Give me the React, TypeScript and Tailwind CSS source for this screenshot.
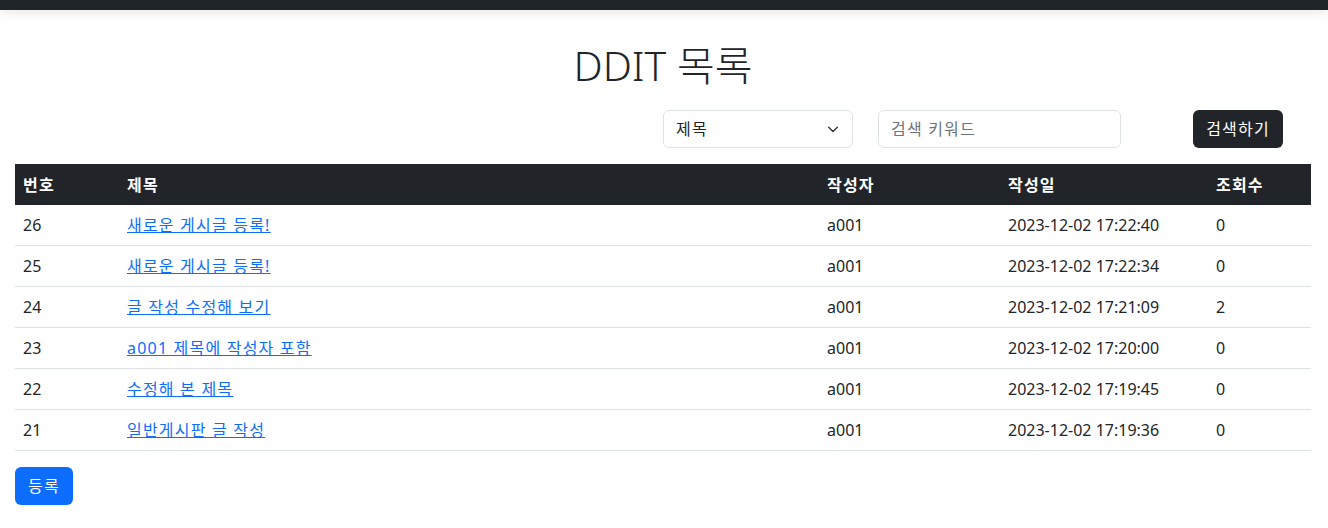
const FONT = "font-['Segoe_UI','Noto_Sans','Noto_Sans_CJK_KR',sans-serif]"

const rows = [
  { no: 26, title: '새로운 게시글 등록!', writer: 'a001', date: '2023-12-02 17:22:40', hit: 0 },
  { no: 25, title: '새로운 게시글 등록!', writer: 'a001', date: '2023-12-02 17:22:34', hit: 0 },
  { no: 24, title: '글 작성 수정해 보기', writer: 'a001', date: '2023-12-02 17:21:09', hit: 2 },
  { no: 23, title: 'a001 제목에 작성자 포함', writer: 'a001', date: '2023-12-02 17:20:00', hit: 0 },
  { no: 22, title: '수정해 본 제목', writer: 'a001', date: '2023-12-02 17:19:45', hit: 0 },
  { no: 21, title: '일반게시판 글 작성', writer: 'a001', date: '2023-12-02 17:19:36', hit: 0 },
]

// Hangul in the fallback CJK font runs a bit narrower than the original, so add a touch of tracking
const KO = 'tracking-[1.2px]'
const TD = 'px-[8px] py-[8px] leading-[24px]'

function SearchBar() {
  return (
    <div className="flex items-center justify-end pr-[28px]">
      <div className="relative w-[190px]">
        <select
          className={`h-[38px] w-full appearance-none rounded-[6px] border border-[#dee2e6] bg-white pl-[12px] pr-[36px] text-[16px] text-[#212529] ${KO}`}
        >
          <option>제목</option>
        </select>
        <svg
          className="pointer-events-none absolute right-[14px] top-[15px]"
          width="12"
          height="8"
          viewBox="0 0 16 11"
          fill="none"
          stroke="#343a40"
          strokeWidth="2"
          strokeLinecap="round"
          strokeLinejoin="round"
        >
          <path d="m2 3 6 6 6-6" />
        </svg>
      </div>
      <input
        className={`ml-[25px] h-[38px] w-[243px] rounded-[6px] border border-[#dee2e6] px-[12px] text-[16px] text-[#212529] placeholder:text-[#6c757d] ${KO}`}
        placeholder="검색 키워드"
      />
      <button
        type="button"
        className={`ml-[72px] h-[38px] w-[90px] rounded-[6px] bg-[#212529] text-[16px] text-white ${KO}`}
      >
        검색하기
      </button>
    </div>
  )
}

export default function App() {
  return (
    <div className={`min-h-screen bg-white text-[16px] text-[#212529] ${FONT}`}>
      <div className="h-[10px] bg-[#212529] shadow-[0_4px_8px_rgba(0,0,0,0.08)]" />
      <div className="px-[15px] pr-[17px]">
        <h1 className="mt-[28px] mb-[18px] text-center text-[41px] leading-[54px] font-light">DDIT 목록</h1>
        <SearchBar />
        <table className="mt-[16px] w-full border-collapse text-left">
          <thead>
            <tr className={`h-[41px] bg-[#212529] text-white ${KO}`}>
              <th className="w-[104px] px-[8px] font-bold">번호</th>
              <th className="w-[700px] px-[8px] font-bold">제목</th>
              <th className="w-[181px] px-[8px] font-bold">작성자</th>
              <th className="w-[208px] px-[8px] font-bold">작성일</th>
              <th className="px-[8px] font-bold">조회수</th>
            </tr>
          </thead>
          <tbody>
            {rows.map((r) => (
              <tr key={r.no} className="border-b border-[#dee2e6]">
                <td className={TD}>{r.no}</td>
                <td className={TD}>
                  <a href="#" className={`text-[#0d6efd] underline ${KO}`}>
                    {r.title}
                  </a>
                </td>
                <td className={TD}>{r.writer}</td>
                <td className={TD}>{r.date}</td>
                <td className={TD}>{r.hit}</td>
              </tr>
            ))}
          </tbody>
        </table>
        <button
          type="button"
          className={`mt-[16px] h-[38px] w-[58px] rounded-[6px] bg-[#0d6efd] text-[16px] text-white ${KO}`}
        >
          등록
        </button>
      </div>
    </div>
  )
}
